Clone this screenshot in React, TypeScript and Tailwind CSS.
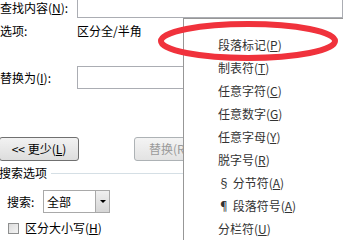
export default function App() {
  const items: [string, string, string][] = [
    ["段落标记(", "P", ")"],
    ["制表符(", "T", ")"],
    ["任意字符(", "C", ")"],
    ["任意数字(", "G", ")"],
    ["任意字母(", "Y", ")"],
    ["脱字号(", "R", ")"],
    ["§ 分节符(", "A", ")"],
    ["¶ 段落符号(", "A", ")"],
    ["分栏符(", "U", ")"],
  ];

  return (
    <div className="relative w-[343px] h-[240px] overflow-hidden bg-white text-[12px] text-black font-['Microsoft_YaHei','Noto_Sans_CJK_SC',sans-serif]">
      {/* dialog body */}
      <div className="flex flex-col">
        <div className="flex items-center h-[22px] -mt-[4px]">
          <span className="w-[77px] shrink-0 pt-[2px]">
            查找内容(<span className="underline">N</span>):
          </span>
          <div className="h-[22px] flex-1 border border-[#abadb3] bg-white" />
        </div>

        <div className="flex items-center h-[24px] mt-[1px]">
          <span className="w-[77px] shrink-0">选项:</span>
          <span>区分全/半角</span>
        </div>

        <div className="flex items-center h-[23px] mt-[23px]">
          <span className="w-[77px] shrink-0">
            替换为(<span className="underline">I</span>):
          </span>
          <div className="h-[23px] flex-1 border border-[#abadb3] bg-white" />
        </div>

        <div className="flex items-center h-[24px] mt-[48px]">
          <button className="w-[80px] h-[24px] -ml-[1px] rounded-[3px] border border-[#707070] bg-gradient-to-b from-[#f2f2f2] to-[#dddddd] text-[12px] text-black">
            &lt;&lt; 更少(<span className="underline">L</span>)
          </button>
          <button className="ml-[55px] w-[80px] h-[24px] rounded-[3px] border border-[#adb2b5] bg-gradient-to-b from-[#f4f4f4] to-[#e3e3e3] text-left pl-[14px] text-[12px] text-[#9a9a9a]">
            替换(R)
          </button>
        </div>

        <div className="flex items-center h-[20px] mt-[2px]">
          <span className="-ml-[1px]">搜索选项</span>
          <div className="ml-[4px] flex-1 h-px bg-[#d5dfe5]" />
        </div>

        <div className="flex items-center h-[23px] mt-[7px]">
          <span className="ml-[7px] w-[36px]">搜索:</span>
          <div className="w-[67px] h-[23px] flex border border-[#a9a9a9] bg-white">
            <span className="flex-1 pl-[3px] leading-[21px]">全部</span>
            <div className="w-[14px] h-[21px] border-l border-[#a9a9a9] bg-gradient-to-b from-[#f0f0f0] to-[#d6d6d6] flex items-center justify-center">
              <div className="w-0 h-0 border-l-[3px] border-r-[3px] border-t-[3px] border-l-transparent border-r-transparent border-t-black" />
            </div>
          </div>
        </div>

        <div className="flex items-center h-[14px] mt-[8px]">
          <div className="ml-[8px] w-[11px] h-[11px] border border-[#8e8f8f] bg-gradient-to-br from-[#dcdcdc] to-[#f4f4f4]" />
          <span className="ml-[6px]">
            区分大小写(<span className="underline">H</span>)
          </span>
        </div>
      </div>

      {/* special-format menu */}
      <div className="absolute left-[183px] top-[18px] right-0 bottom-0 bg-white border-l border-t border-[#979797] pt-[14px] pl-[34px] text-[#333333]">
        {items.map(([a, k, b], i) => (
          <div key={i} className="h-[23px] leading-[23px]">
            {a}
            <span className="underline">{k}</span>
            {b}
          </div>
        ))}
      </div>

      {/* red annotation */}
      <svg className="absolute left-0 top-0" width="343" height="240">
        <ellipse cx="248" cy="41" rx="87" ry="17" fill="none" stroke="#f0323c" strokeWidth="6" />
      </svg>
    </div>
  );
}
